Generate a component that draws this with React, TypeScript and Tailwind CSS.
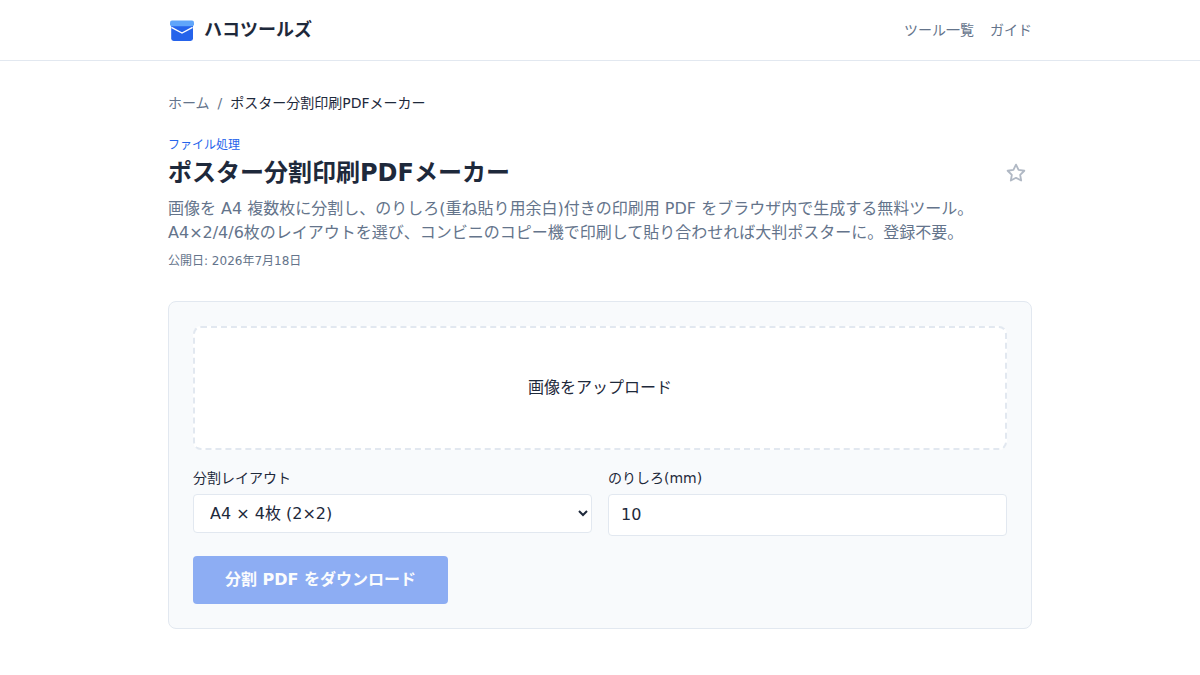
import { useState } from "react";

const layouts = [
  { value: "2", label: "A4 × 2枚 (1×2)" },
  { value: "4", label: "A4 × 4枚 (2×2)" },
  { value: "6", label: "A4 × 6枚 (2×3)" },
];

function Logo() {
  return (
    <svg width="28" height="28" viewBox="0 0 28 28" aria-hidden="true">
      <rect x="3.2" y="7" width="21.8" height="18" rx="2.4" fill="#2563eb" />
      <path d="M3.4 11.4 14 17 24.6 11.4" fill="none" stroke="#fff" strokeWidth="1.4" />
      <rect x="2" y="4.4" width="24" height="5.8" rx="2" fill="#60a5fa" />
    </svg>
  );
}

function Header() {
  return (
    <header className="border-b border-[#e2e8f0] bg-white">
      <div className="max-w-4xl mx-auto px-4 py-4 flex items-center justify-between">
        <a href="#" className="flex items-center gap-2 text-lg font-bold">
          <Logo />
          <span>ハコツールズ</span>
        </a>
        <nav className="flex gap-4 text-sm text-[#64748b]">
          <a href="#tools">ツール一覧</a>
          <a href="#guide">ガイド</a>
        </nav>
      </div>
    </header>
  );
}

function FavoriteButton() {
  const [favorite, setFavorite] = useState(false);

  return (
    <button
      type="button"
      aria-label="お気に入り"
      aria-pressed={favorite}
      className="p-1.5 shrink-0 text-[#64748b] opacity-50 cursor-pointer"
      onClick={() => setFavorite(!favorite)}
    >
      <svg
        width="20"
        height="20"
        viewBox="0 0 24 24"
        fill={favorite ? "currentColor" : "none"}
        stroke="currentColor"
        strokeWidth="2.2"
        strokeLinejoin="round"
      >
        <path d="M12 2l3.09 6.26L22 9.27l-5 4.87 1.18 6.88L12 17.77l-6.18 3.25L7 14.14 2 9.27l6.91-1.01L12 2z" />
      </svg>
    </button>
  );
}

function PosterTool() {
  const [file, setFile] = useState<File | null>(null);
  const [layout, setLayout] = useState("4");
  const [margin, setMargin] = useState("10");

  return (
    <section className="mt-8 p-6 rounded-lg border border-[#e2e8f0] bg-[#f8fafc]">
      <label className="block py-12 rounded-lg border-2 border-dashed border-[#e2e8f0] bg-white text-center cursor-pointer">
        {file ? file.name : "画像をアップロード"}
        <input
          type="file"
          accept="image/*"
          className="sr-only"
          onChange={(e) => setFile(e.target.files?.[0] ?? null)}
        />
      </label>

      <div className="mt-4 grid grid-cols-1 sm:grid-cols-2 gap-4 items-start">
        <div>
          <label htmlFor="layout" className="block mb-1 text-sm leading-6">
            分割レイアウト
          </label>
          <select
            id="layout"
            value={layout}
            onChange={(e) => setLayout(e.target.value)}
            className="block w-full px-3 py-2 rounded border border-[#e2e8f0] bg-white leading-6"
          >
            {layouts.map((l) => (
              <option key={l.value} value={l.value}>
                {l.label}
              </option>
            ))}
          </select>
        </div>
        <div>
          <label htmlFor="margin" className="block mb-1 text-sm leading-6">
            のりしろ(mm)
          </label>
          <input
            id="margin"
            type="number"
            value={margin}
            onChange={(e) => setMargin(e.target.value)}
            className="block w-full px-3 py-2 rounded border border-[#e2e8f0] bg-white"
          />
        </div>
      </div>

      <button
        type="button"
        disabled={!file}
        className="mt-5 px-8 py-3 rounded bg-[#2563eb] text-white font-bold disabled:opacity-50"
      >
        分割 PDF をダウンロード
      </button>
    </section>
  );
}

export default function App() {
  return (
    <div className="font-['DejaVu_Sans','Noto_Sans_CJK_JP',sans-serif] text-[#1e293b]" lang="ja">
      <Header />
      <main className="max-w-4xl mx-auto px-4 py-8">
        <nav aria-label="パンくずリスト" className="flex gap-2 text-sm text-[#64748b]">
          <a href="#">ホーム</a>
          <span>/</span>
          <span className="text-[#1e293b]">ポスター分割印刷PDFメーカー</span>
        </nav>

        <p className="mt-6 text-xs text-[#2563eb]">ファイル処理</p>
        <div className="mt-1 flex items-center justify-between gap-4">
          <h1 className="text-2xl font-bold">ポスター分割印刷PDFメーカー</h1>
          <FavoriteButton />
        </div>
        <p className="mt-2 text-[#64748b]">
          画像を A4 複数枚に分割し、のりしろ(重ね貼り用余白)付きの印刷用 PDF をブラウザ内で生成する無料ツール。A4×2/4/6枚のレイアウトを選び、コンビニのコピー機で印刷して貼り合わせれば大判ポスターに。登録不要。
        </p>
        <p className="mt-2 text-xs text-[#64748b]">公開日: 2026年7月18日</p>

        <PosterTool />
      </main>
    </div>
  );
}
